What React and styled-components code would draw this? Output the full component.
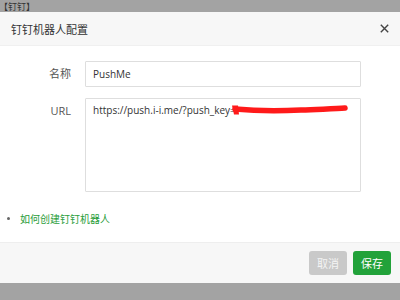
import React from "react";
import styled, { createGlobalStyle } from "styled-components";

const Global = createGlobalStyle`
  html, body { margin: 0; padding: 0; }
  body {
    background: #a3a3a3;
    font-family: "Open Sans", "Noto Sans CJK SC", sans-serif;
    overflow: hidden;
  }
`;

const Page = styled.div`
  position: relative;
  width: 400px;
  height: 300px;
  overflow: hidden;
  background: #a3a3a3;
`;

const BackLabel = styled.div`
  font-size: 9px;
  line-height: 11px;
  color: #333;
  padding: 1px 0 0 0;
  margin-left: -1px;
`;

const Dialog = styled.div`
  position: absolute;
  left: 0;
  top: 12px;
  width: 400px;
  height: 271px;
  background: #fff;
  display: flex;
  flex-direction: column;
`;

const Header = styled.div`
  height: 34px;
  background: #f7f7f7;
  border-bottom: 1px solid #f0f0f0;
  display: flex;
  align-items: center;
  justify-content: space-between;
  padding: 0 11px 0 11px;
  box-sizing: border-box;
`;

const Title = styled.div`
  font-size: 11px;
  color: #333;
`;

const Close = styled.button`
  border: 0;
  background: none;
  padding: 0;
  width: 9px;
  height: 9px;
  display: flex;
  cursor: pointer;
`;

const Body = styled.div`
  flex: 1;
  padding-top: 15px;
  display: flex;
  flex-direction: column;
`;

const Form = styled.div`
  display: grid;
  grid-template-columns: 71px 276px;
  column-gap: 14px;
  row-gap: 11px;
  align-items: start;
`;

const Label = styled.div`
  font-size: 11px;
  line-height: 26px;
  color: #555;
  text-align: right;
`;

const Input = styled.input`
  box-sizing: border-box;
  width: 276px;
  height: 26px;
  border: 1px solid #dedede;
  border-radius: 1px;
  padding: 0 7px;
  font: inherit;
  font-size: 10px;
  color: #333;
  outline: none;
`;

const AreaWrap = styled.div`
  position: relative;
  width: 276px;
  height: 94px;
`;

const Area = styled.textarea`
  box-sizing: border-box;
  width: 276px;
  height: 94px;
  border: 1px solid #dedede;
  border-radius: 1px;
  padding: 4px 7px;
  font: inherit;
  font-size: 10px;
  line-height: 14px;
  color: #333;
  resize: none;
  outline: none;
  display: block;
`;

const Scribble = styled.svg`
  position: absolute;
  left: 146px;
  top: 5px;
  pointer-events: none;
`;

const Help = styled.div`
  display: flex;
  align-items: center;
  gap: 10px;
  padding-left: 7px;
  margin-top: 19px;
`;

const Dot = styled.span`
  width: 3px;
  height: 3px;
  border-radius: 50%;
  background: #666;
`;

const HelpLink = styled.a`
  font-size: 10px;
  color: #2a9d3a;
  text-decoration: none;
`;

const Footer = styled.div`
  height: 41px;
  background: #f7f7f7;
  border-top: 1px solid #eeeeee;
  box-sizing: border-box;
  display: flex;
  align-items: center;
  justify-content: flex-end;
  gap: 6px;
  padding-right: 9px;
`;

const Btn = styled.button`
  width: 38px;
  height: 24px;
  border: 0;
  border-radius: 3px;
  font: inherit;
  font-size: 11px;
  color: ${(p) => (p.$primary ? "#ffffff" : "#f4f4f4")};
  background: ${(p) => (p.$primary ? "#22a23a" : "#c9c9c9")};
  padding: 0;
  cursor: pointer;
`;

export default function App() {
  return (
    <Page>
      <Global />
      <BackLabel>【钉钉】</BackLabel>
      <Dialog>
        <Header>
          <Title>钉钉机器人配置</Title>
          <Close aria-label="close">
            <svg width="9" height="9" viewBox="0 0 9 9">
              <path d="M0.8 0.8 L8.2 8.2 M8.2 0.8 L0.8 8.2" stroke="#444" strokeWidth="1.4" />
            </svg>
          </Close>
        </Header>
        <Body>
          <Form>
            <Label>名称</Label>
            <Input defaultValue="PushMe" />
            <Label>URL</Label>
            <AreaWrap>
              <Area defaultValue="https://push.i-i.me/?push_key=" />
              <Scribble width="120" height="14" viewBox="0 0 120 14">
                <path
                  d="M4 6 C20 7.5, 50 8, 70 7 C90 6, 105 6, 114 5"
                  stroke="#ff1a1a"
                  strokeWidth="5.5"
                  strokeLinecap="round"
                  fill="none"
                />
                <path d="M1 2.5 L7 2.5 L8 11.5 L3 11.5 Z" fill="#ff1a1a" />
              </Scribble>
            </AreaWrap>
          </Form>
          <Help>
            <Dot />
            <HelpLink href="#">如何创建钉钉机器人</HelpLink>
          </Help>
        </Body>
        <Footer>
          <Btn>取消</Btn>
          <Btn $primary>保存</Btn>
        </Footer>
      </Dialog>
    </Page>
  );
}
